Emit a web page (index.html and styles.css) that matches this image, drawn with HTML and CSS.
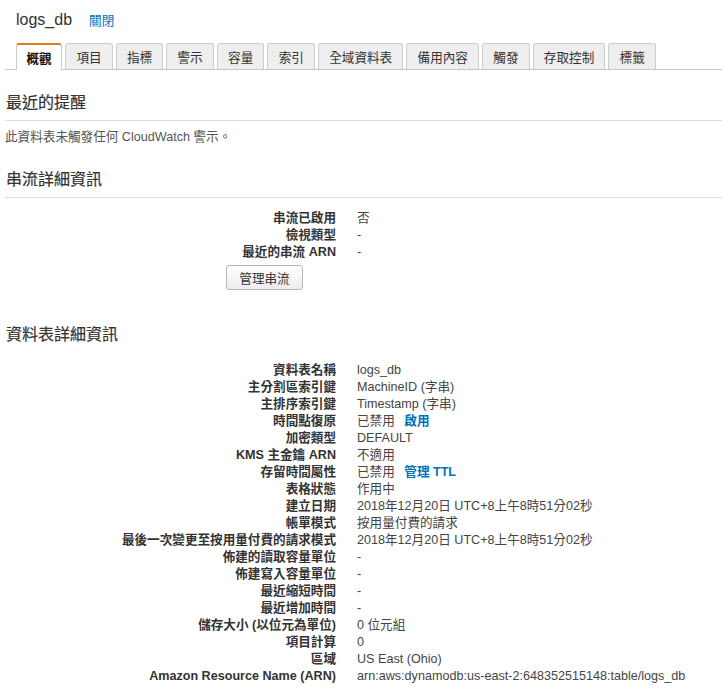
FILE: index.html
```html
<!DOCTYPE html>
<html lang="zh-Hant">
<head>
<meta charset="utf-8">
<title>logs_db</title>
<link rel="stylesheet" href="styles.css">
</head>
<body>
<div class="page">
  <div class="titlebar">
    <span class="title">logs_db</span>
    <a class="close-link" href="#">關閉</a>
  </div>
  <div class="tabs">
    <span class="tab active">概觀</span>
    <span class="tab">項目</span>
    <span class="tab">指標</span>
    <span class="tab">警示</span>
    <span class="tab">容量</span>
    <span class="tab">索引</span>
    <span class="tab">全域資料表</span>
    <span class="tab">備用內容</span>
    <span class="tab">觸發</span>
    <span class="tab">存取控制</span>
    <span class="tab">標籤</span>
  </div>

  <section class="section">
    <h2 class="heading ruled">最近的提醒</h2>
    <p class="note">此資料表未觸發任何 CloudWatch 警示。</p>
  </section>

  <section class="section">
    <h2 class="heading ruled">串流詳細資訊</h2>
    <dl class="details">
      <dt>串流已啟用</dt><dd>否</dd>
      <dt>檢視類型</dt><dd>-</dd>
      <dt>最近的串流 ARN</dt><dd>-</dd>
    </dl>
    <div class="btn-row"><button class="btn">管理串流</button></div>
  </section>

  <section class="section">
    <h2 class="heading">資料表詳細資訊</h2>
    <dl class="details table-details">
      <dt>資料表名稱</dt><dd>logs_db</dd>
      <dt>主分割區索引鍵</dt><dd>MachineID (字串)</dd>
      <dt>主排序索引鍵</dt><dd>Timestamp (字串)</dd>
      <dt>時間點復原</dt><dd>已禁用 <a class="action" href="#">啟用</a></dd>
      <dt>加密類型</dt><dd>DEFAULT</dd>
      <dt>KMS 主金鑰 ARN</dt><dd>不適用</dd>
      <dt>存留時間屬性</dt><dd>已禁用 <a class="action" href="#">管理 TTL</a></dd>
      <dt>表格狀態</dt><dd>作用中</dd>
      <dt>建立日期</dt><dd>2018年12月20日 UTC+8上午8時51分02秒</dd>
      <dt>帳單模式</dt><dd>按用量付費的請求</dd>
      <dt>最後一次變更至按用量付費的請求模式</dt><dd>2018年12月20日 UTC+8上午8時51分02秒</dd>
      <dt>佈建的讀取容量單位</dt><dd>-</dd>
      <dt>佈建寫入容量單位</dt><dd>-</dd>
      <dt>最近縮短時間</dt><dd>-</dd>
      <dt>最近增加時間</dt><dd>-</dd>
      <dt>儲存大小 (以位元為單位)</dt><dd>0 位元組</dd>
      <dt>項目計算</dt><dd>0</dd>
      <dt>區域</dt><dd>US East (Ohio)</dd>
      <dt>Amazon Resource Name (ARN)</dt><dd>arn:aws:dynamodb:us-east-2:648352515148:table/logs_db</dd>
    </dl>
  </section>
</div>
</body>
</html>
```

FILE: styles.css
```css
* { box-sizing: border-box; }
html, body { margin: 0; padding: 0; background: #fff; }
body {
  font-family: "Liberation Sans", "Noto Sans CJK TC", Arial, sans-serif;
  font-size: 12.6px;
  color: #444;
}

.titlebar {
  display: flex;
  align-items: baseline;
  gap: 17px;
  padding: 10px 0 0 16px;
  height: 43px;
}
.title { font-size: 16px; color: #333; }
.close-link { font-size: 12.6px; color: #0073bb; text-decoration: none; }

.tabs {
  display: flex;
  gap: 3px;
  margin-left: 5px;
  padding-left: 11px;
  border-bottom: 1px solid #c8c8c8;
  height: 27px;
  align-items: flex-end;
}
.tab {
  display: flex;
  align-items: center;
  height: 26px;
  padding: 0 10.2px;
  background: #eeeeee;
  border: 1px solid #cccccc;
  border-bottom: none;
  border-radius: 3px 3px 0 0;
  color: #333;
  white-space: nowrap;
}
.tab.active {
  background: #fff;
  border-top: 2px solid #e4781c;
  height: 27px;
  margin-bottom: -1px;
  color: #111;
  font-weight: bold;
  padding: 0 9.5px;
}

.section { margin-left: 5px; }
.heading {
  margin: 0;
  font-size: 16px;
  font-weight: normal;
  color: #333;
  padding: 0 0 0 1px;
  line-height: 20px;
  -webkit-text-stroke: 0.2px #333;
}
.ruled { border-bottom: 1px solid #dddddd; padding-bottom: 7px; }
.section:nth-of-type(1) .heading { margin-top: 23px; }
.note { margin: 8px 0 0 0; line-height: 17px; color: #555; }

.section:nth-of-type(2) .heading { margin-top: 24px; }
.details {
  display: grid;
  grid-template-columns: 331px 1fr;
  column-gap: 21px;
  margin: 12px 0 0 0;
  line-height: 17px;
}
.details dt {
  text-align: right;
  font-weight: bold;
  color: #333;
  white-space: nowrap;
}
.details dd { margin: 0; color: #444; white-space: nowrap; }
.action { color: #0073bb; font-weight: bold; text-decoration: none; margin-left: 6px; }

.btn-row { padding: 4px 0 0 221px; }
.btn {
  font-family: inherit;
  font-size: 12.6px;
  color: #333;
  height: 25px;
  width: 77px;
  border: 1px solid #b7b7b7;
  border-radius: 3px;
  background: linear-gradient(#ffffff, #ececec);
  padding: 0;
}

.section:nth-of-type(3) .heading { margin-top: 35px; }
.table-details { margin-top: 17px; }
```
